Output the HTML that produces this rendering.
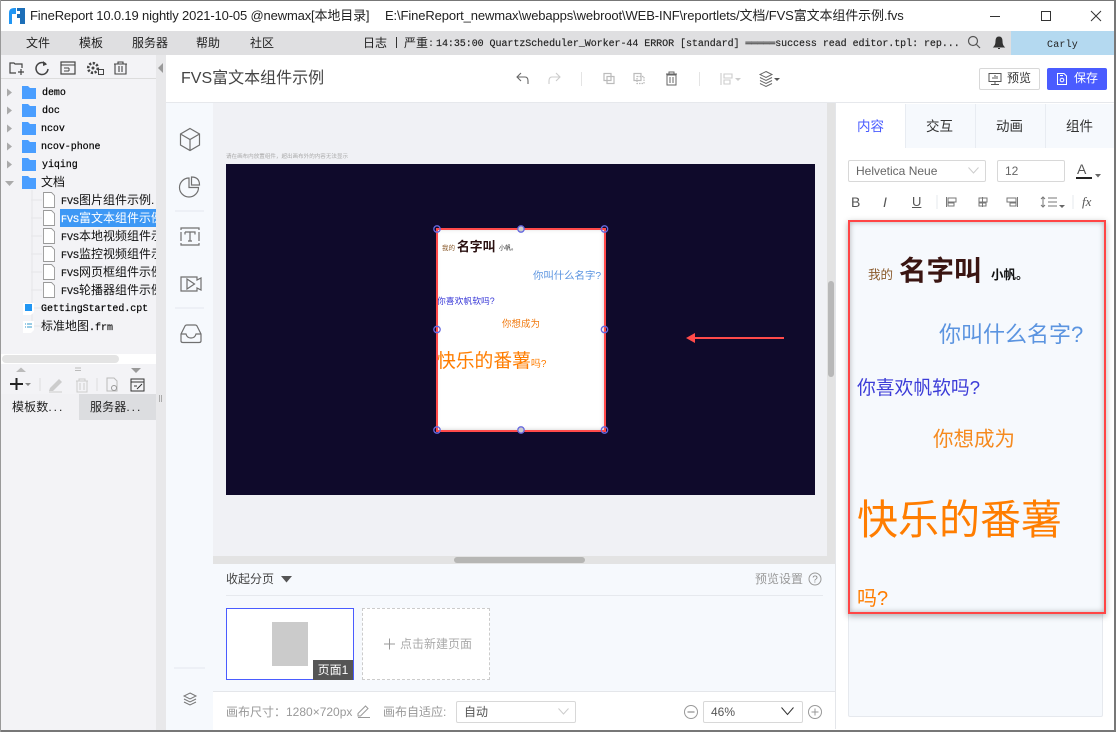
<!DOCTYPE html>
<html><head><meta charset="utf-8">
<style>
html,body{margin:0;padding:0;width:1116px;height:732px;overflow:hidden;background:#fff}
body{position:relative;font-family:"Liberation Sans","Noto Sans CJK SC",sans-serif;color:#333}
.a{position:absolute;white-space:nowrap}
.t{position:absolute;white-space:nowrap;font-family:"Liberation Mono","Noto Sans CJK SC",monospace;font-size:10px;color:#000;line-height:18px;height:18px;letter-spacing:-.05px;-webkit-text-stroke:.2px #000}
.f{font:10px "Liberation Mono",monospace;letter-spacing:-.02px;-webkit-text-stroke:.2px currentColor}
svg{position:absolute;overflow:visible}
.g{fill:none;stroke:#707070;stroke-width:1.2}
.l{fill:none;stroke:#555;stroke-width:1.2}
.d{fill:none;stroke:#bbb;stroke-width:1.2}
</style></head><body>
<!-- title -->
<svg style="left:9px;top:8px" width="16" height="16"><path d="M0 5 Q0 0 5 0H7V6H3V16H0Z" fill="#2196f3"/><path d="M8 0H16V16H11V10H8V6H11V3H8Z" fill="#1d6fb8"/></svg>
<div class="a" style="left:30px;top:7px;font-size:13px;line-height:18px;color:#222;letter-spacing:-.15px">FineReport 10.0.19 nightly 2021-10-05 @newmax[本地目录]</div>
<div class="a" style="left:385px;top:7px;font-size:13px;line-height:18px;color:#222;letter-spacing:-.12px">E:\FineReport_newmax\webapps\webroot\WEB-INF\reportlets/文档/FVS富文本组件示例.fvs</div>
<svg style="left:990px;top:10px" width="120" height="14"><path d="M0 6.500H10" stroke="#333" fill="none"/><rect x="51.500" y="1.500" width="9" height="9" stroke="#333" fill="none"/><path d="M101 1L111 11M111 1L101 11" stroke="#333" fill="none"/></svg>
<!-- menu -->
<div class="a" style="left:1px;top:31px;width:1115px;height:24px;background:#dfdfe1"></div>
<div class="a" style="left:1011px;top:31px;width:105px;height:24px;background:#b4d9f0"></div>
<div class="a" style="left:26px;top:34px;font-size:12px;line-height:18px;color:#222">文件</div>
<div class="a" style="left:79px;top:34px;font-size:12px;line-height:18px;color:#222">模板</div>
<div class="a" style="left:132px;top:34px;font-size:12px;line-height:18px;color:#222">服务器</div>
<div class="a" style="left:196px;top:34px;font-size:12px;line-height:18px;color:#222">帮助</div>
<div class="a" style="left:250px;top:34px;font-size:12px;line-height:18px;color:#222">社区</div>
<div class="a" style="left:363px;top:34px;font-size:12px;line-height:18px;color:#222">日志</div>
<div class="a" style="left:396px;top:37px;width:1px;height:11px;background:#333"></div>
<div class="a" style="left:404px;top:34px;font-size:12px;line-height:18px;color:#222">严重</div>
<div class="a" style="left:428px;top:37px;font:10px/16px 'Liberation Mono',monospace;color:#222">:</div>
<div class="a" style="left:436px;top:37px;font:10px/16px 'Liberation Mono',monospace;color:#222;letter-spacing:-.05px;-webkit-text-stroke:.15px #222">14:35:00 QuartzScheduler_Worker-44 ERROR [standard] ═════success read editor.tpl: rep...</div>
<svg style="left:967px;top:35px" width="40" height="16"><circle cx="6" cy="6" r="4.500" class="l"/><path d="M9.500 9.500L13 13" class="l"/><path d="M27 12Q29 10 29 6Q29 2 32 2Q35 2 35 6Q35 10 37 12Z M31 13.500H33" fill="#333" stroke="#333"/></svg>
<div class="a" style="left:1047px;top:38px;font:10px/16px 'Liberation Mono',monospace;letter-spacing:.2px;color:#222">Carly</div>

<!-- left panel -->
<div class="a" style="left:1px;top:55px;width:155px;height:677px;background:#f3f3f6"></div>
<div class="a" style="left:1px;top:78px;width:155px;height:1px;background:#dcdcdc"></div>
<div class="a" style="left:156px;top:55px;width:10px;height:677px;background:#e8e8ea"></div>
<svg style="left:158px;top:62px" width="6" height="12"><path d="M5 1V11L0 6Z" fill="#999"/></svg>
<svg style="left:9px;top:60px" width="125" height="16">
<path d="M7 13H1V3H5L6 4H13V8" fill="none" stroke="#444" stroke-width="1.200"/><path d="M12 9V15M9 12H15" stroke="#444" stroke-width="1.200"/>
<path d="M37 4A6 6 0 1 0 39 9" fill="none" stroke="#444" stroke-width="1.500"/><path d="M34 1L38 4.500L34 6Z" fill="#444"/>
<rect x="52" y="2" width="14" height="12" fill="none" stroke="#444" stroke-width="1.200"/><path d="M52 5H66M55 8H60M55 11H60M60 8V11" stroke="#444" fill="none"/>
<circle cx="84" cy="8" r="4.800" fill="none" stroke="#444" stroke-width="2.600" stroke-dasharray="2.200 1.500"/><circle cx="84" cy="8" r="1.500" fill="#444"/><rect x="89.500" y="9.500" width="5" height="5" fill="#f3f3f6" stroke="#444"/>
<path d="M105 4H118M109 4V2H114V4M106 4V14H117V4M110 6V12M113 6V12" fill="none" stroke="#444" stroke-width="1.100"/>
</svg>
<!-- tree arrows/folders -->
<svg style="left:0;top:84px" width="40" height="112">
<g fill="#aaa"><path d="M7 4.500L12 8.500L7 12.500Z"/><path d="M7 22.500L12 26.500L7 30.500Z"/><path d="M7 40.500L12 44.500L7 48.500Z"/><path d="M7 58.500L12 62.500L7 66.500Z"/><path d="M7 76.500L12 80.500L7 84.500Z"/><path d="M5 97L14 97L9.500 102Z"/></g>
<g fill="#4a9eff">
<path d="M22 2H28L30 4H36V15H22Z"/><path d="M22 20H28L30 22H36V33H22Z"/><path d="M22 38H28L30 40H36V51H22Z"/><path d="M22 56H28L30 58H36V69H22Z"/><path d="M22 74H28L30 76H36V87H22Z"/><path d="M22 92H28L30 94H36V105H22Z"/></g>
</svg>
<div class="t" style="left:42px;top:85px">demo</div>
<div class="t" style="left:42px;top:103px">doc</div>
<div class="t" style="left:41px;top:121px">ncov</div>
<div class="t" style="left:41px;top:139px">ncov-phone</div>
<div class="t" style="left:42px;top:157px">yiqing</div>
<div class="a" style="left:41px;top:173px;font-size:12px;line-height:18px;color:#111">文档</div>
<!-- file icons -->
<svg style="left:28px;top:190px" width="30" height="130"><path d="M3 10H14M3 28H14M3 46H14M3 64H14M3 82H14M3 100H14M3 118H20M3 136H20M4 0V136" stroke="#e6e6e8" fill="none"/>
<g fill="#fff" stroke="#999" stroke-width=".9"><path d="M15.500 2.500H23.500L26.500 5.500V17.500H15.500Z"/><path d="M15.500 20.500H23.500L26.500 23.500V35.500H15.500Z"/><path d="M15.500 38.500H23.500L26.500 41.500V53.500H15.500Z"/><path d="M15.500 56.500H23.500L26.500 59.500V71.500H15.500Z"/><path d="M15.500 74.500H23.500L26.500 77.500V89.500H15.500Z"/><path d="M15.500 92.500H23.500L26.500 95.500V107.500H15.500Z"/></g></svg>
<div class="a" style="left:60px;top:209px;width:96px;height:18px;background:#3d98f5"></div>
<div style="position:absolute;left:61px;top:191px;width:95px;height:126px;overflow:hidden;font-size:12px;line-height:18px;color:#111;white-space:nowrap">
<div><span class="f">FVS</span>图片组件示例.</div>
<div style="color:#fff"><span class="f">FVS</span>富文本组件示例</div>
<div><span class="f">FVS</span>本地视频组件示</div>
<div><span class="f">FVS</span>监控视频组件示</div>
<div><span class="f">FVS</span>网页框组件示例</div>
<div><span class="f">FVS</span>轮播器组件示例</div>
</div>
<svg style="left:22px;top:302px" width="14" height="32"><path d="M1 1H12V10L9 13H1Z" fill="#fff"/><rect x="3" y="2" width="7" height="7" fill="#2196f3"/><path d="M1 19H12V28L9 31H1Z" fill="#fff"/><path d="M3 22H4M5 22H10M3 25H4M5 25H10" stroke="#39c"/></svg>
<div class="t" style="left:41px;top:301px">GettingStarted.cpt</div>
<div class="a" style="left:41px;top:317px;font-size:12px;line-height:18px;color:#111">标准地图<span class="f">.frm</span></div>
<!-- tree scrollbar -->
<div class="a" style="left:1px;top:354px;width:155px;height:10px;background:#fff"></div>
<div class="a" style="left:2px;top:355px;width:117px;height:8px;background:#e4e4e4;border-radius:4px"></div>
<svg style="left:0;top:364px" width="156" height="10"><path d="M16 8L21 3.500L26 8Z" fill="#bbb"/><path d="M75 4H81M75 6.500H81" stroke="#bbb"/><path d="M131 4H141L136 9Z" fill="#999"/></svg>
<svg style="left:8px;top:375px" width="148" height="20">
<path d="M2 9H15M8.500 3V15" stroke="#222" stroke-width="2"/><path d="M17 8H23L20 11Z" fill="#888"/>
<path d="M32 3V16" stroke="#ddd"/>
<path d="M42 13L51 4L54 7L45 16H41Z" fill="#ccc"/><path d="M41 17H54" stroke="#ccc"/>
<path d="M68 6H80M71 6V4H77V6M69 6V17H79V6M72 8V15M76 8V15" fill="none" stroke="#ccc" stroke-width="1"/>
<path d="M89 3V16" stroke="#ddd"/>
<path d="M99 3H106L109 6V16H99Z" fill="none" stroke="#bbb"/><circle cx="106" cy="13" r="2.500" fill="none" stroke="#999"/>
<rect x="123" y="4" width="13" height="12" fill="none" stroke="#333"/><path d="M123 7H136" stroke="#333"/><path d="M126 11H129M129 14L134 9" stroke="#333" fill="none"/>
</svg>
<div class="a" style="left:1px;top:394px;width:78px;height:26px;background:#f1f1f4"></div>
<div class="a" style="left:79px;top:394px;width:77px;height:26px;background:#dcdde0"></div>
<div class="a" style="left:12px;top:398px;font-size:12px;line-height:18px;color:#222;letter-spacing:.1px">模板数<span style="letter-spacing:2px">...</span></div>
<div class="a" style="left:90px;top:398px;font-size:12px;line-height:18px;color:#222;letter-spacing:.1px">服务器<span style="letter-spacing:2px">...</span></div>
<div class="a" style="left:159px;top:395px;width:1px;height:7px;background:#aaa;box-shadow:2px 0 #aaa"></div>

<!-- header -->
<div class="a" style="left:166px;top:55px;width:950px;height:47px;background:#fff"></div>
<div class="a" style="left:166px;top:102px;width:950px;height:1px;background:#e6e8ec"></div>
<div class="a" style="left:181px;top:69px;font-size:16px;line-height:20px;color:#444">FVS富文本组件示例</div>
<svg style="left:510px;top:70px" width="280" height="18">
<path d="M11 3L7 7L11 11M7 7H15Q18 7 18 11V14" fill="none" stroke="#666" stroke-width="1.100"/>
<path d="M46 3L50 7L46 11M50 7H42Q39 7 39 11V14" fill="none" stroke="#ccc" stroke-width="1.100"/>
<path d="M71.500 2V16" stroke="#e4e4e4"/>
<rect x="94" y="3.500" width="7" height="7" class="d"/><rect x="97" y="6.500" width="7" height="7" class="d"/>
<rect x="124" y="3.500" width="7" height="7" class="d"/><rect x="127" y="6.500" width="7" height="7" class="d" stroke-dasharray="1.500 1"/>
<path d="M156 4H167M159 4V2H164V4M157 5H166V15H157ZM160 7V13M163 7V13" fill="#fff" stroke="#666" stroke-width="1"/>
<path d="M189.500 2V16" stroke="#e4e4e4"/>
<path d="M211 3V15M214 4H222V8H214ZM214 10H220V14H214Z" fill="none" stroke="#ccc" stroke-width="1.100"/><path d="M225 8H231L228 11Z" fill="#ccc"/>
<path d="M256 1.500L262 4.500L256 7.500L250 4.500Z M250 7.500L256 10.500L262 7.500M250 10.500L256 13.500L262 10.500M250 13.500L256 16.500L262 13.500" fill="none" stroke="#666"/><path d="M264 8H270L267 11Z" fill="#555"/>
</svg>
<div class="a" style="left:979px;top:68px;width:59px;height:20px;border:1px solid #d8d8d8;border-radius:2px"></div>
<svg style="left:988px;top:72px" width="16" height="14"><rect x="1" y="1.500" width="12" height="8" fill="none" stroke="#555"/><path d="M7 9V12M3 12.500H11M5 7V5M7 7V3M9 7V4" stroke="#555"/></svg>
<div class="a" style="left:1007px;top:70px;font-size:12px;line-height:17px;color:#333">预览</div>
<div class="a" style="left:1047px;top:68px;width:60px;height:22px;background:#4a5cff;border-radius:2px"></div>
<svg style="left:1055px;top:72px" width="14" height="14"><path d="M2.500 1.500H9L11.500 4V12.500H2.500Z" fill="none" stroke="#fff"/><circle cx="7" cy="8" r="1.800" fill="none" stroke="#fff"/><path d="M5 3.500H8" stroke="#fff"/></svg>
<div class="a" style="left:1074px;top:70px;font-size:12px;line-height:17px;color:#fff">保存</div>

<!-- left rail -->
<div class="a" style="left:166px;top:103px;width:47px;height:629px;background:#f6f9fd"></div>
<svg style="left:166px;top:103px" width="47" height="610">
<path d="M24 25.500L33.500 31V42L24 47.500L14.500 42V31Z M14.500 31L24 36.500L33.500 31M24 36.500V47.500" class="g"/>
<path d="M23 75A9.500 9.500 0 1 0 32.500 84.500H23Z M25.500 74V82H33.500Q33.500 74 25.500 74Z" class="g"/>
<path d="M9 108H38M9 205H38" stroke="#e4e8ee"/>
<path d="M15 127V125H33V127M15 140V142H33V140M15 129V138M33 129V138" class="g"/><path d="M19 129H29V131.500M19 131.500V129M24 129V138M22 138H26" class="g"/>
<path d="M15 174V188H31V185L35 187V175L31 177V174Z" class="g"/><path d="M21 176V186L28.500 181Z" class="g"/>
<path d="M15 231V238Q15 239.500 17 239.500H33Q35 239.500 35 238V231L31 223Q30.500 222 29 222H21Q19.500 222 19 223Z M15 231H20Q21 235 25 235Q29 235 30 231H35" class="g"/>
<path d="M8 565H39" stroke="#e4e8ee"/>
<path d="M24 590L30 593L24 596L18 593Z M18 596L24 599L30 596M18 599L24 602L30 599" fill="none" stroke="#777" stroke-width="1"/>
</svg>

<!-- canvas -->
<div class="a" style="left:213px;top:103px;width:614px;height:453px;background:#f0f1f5"></div>
<div class="a" style="left:827px;top:103px;width:9px;height:453px;background:#e3e3e3"></div>
<div class="a" style="left:828px;top:281px;width:6px;height:96px;background:#b8b8b8;border-radius:3px"></div>
<div class="a" style="left:213px;top:556px;width:623px;height:8px;background:#e3e3e3"></div>
<div class="a" style="left:454px;top:557px;width:131px;height:6px;background:#b6b6b4;border-radius:3px"></div>
<div class="a" style="left:226px;top:153px;font-size:5.550px;line-height:9px;color:#aaa">请在画布内放置组件，超出画布外的内容无法显示</div>
<div class="a" style="left:226px;top:164px;width:589px;height:331px;background:#0f0a2b"></div>
<div class="a" style="left:436px;top:229px;width:168px;height:201px;background:#fff;box-shadow:inset 0 0 4px #ccc"></div>
<div class="a" style="left:436px;top:229px;width:168px;height:201px;overflow:hidden">
 <div class="a" style="left:6px;top:15px;font-size:6.500px;line-height:10px;color:#8a5a2b">我的</div>
 <div class="a" style="left:21px;top:9px;font-size:12.800px;font-weight:bold;line-height:17px;color:#2a1010">名字叫</div>
 <div class="a" style="left:63px;top:15px;font-size:6px;line-height:10px;color:#222">小帆。</div>
 <div class="a" style="left:97px;top:40px;font-size:10.400px;line-height:15px;color:#5b94e0">你叫什么名字?</div>
 <div class="a" style="left:1px;top:65px;font-size:8.800px;line-height:14px;color:#3a3ad8">你喜欢帆软吗?</div>
 <div class="a" style="left:66px;top:89px;font-size:9.500px;line-height:14px;color:#f07a10">你想成为</div>
 <div class="a" style="left:1px;top:119px;font-size:18.800px;line-height:26px;color:#ff7d00">快乐的番薯<span style="font-size:10px">吗?</span></div>
</div>
<div class="a" style="left:436px;top:228px;width:166px;height:200px;border:2px solid #ff4a4a"></div>
<svg style="left:430px;top:222px" width="180" height="214" fill="none" stroke="#6668e0" stroke-width="1.300">
<circle cx="7" cy="7" r="3.200"/><circle cx="91" cy="7" r="3.200" fill="#ccc"/><circle cx="174.500" cy="7" r="3.200"/>
<circle cx="7" cy="107.500" r="3.200"/><circle cx="174.500" cy="107.500" r="3.200"/>
<circle cx="7" cy="208" r="3.200"/><circle cx="91" cy="208" r="3.200" fill="#ccc"/><circle cx="174.500" cy="208" r="3.200"/>
</svg>
<svg style="left:686px;top:332px" width="100" height="12"><path d="M7 6H98" stroke="#ff4a4a" stroke-width="2"/><path d="M0 6L9 1V11Z" fill="#ff4a4a"/></svg>

<!-- page panel -->
<div class="a" style="left:213px;top:564px;width:623px;height:127px;background:#f6f9fd"></div>
<div class="a" style="left:226px;top:570px;font-size:12px;line-height:18px;color:#444">收起分页</div>
<svg style="left:281px;top:576px" width="12" height="8"><path d="M0 0H11L5.500 6.500Z" fill="#555"/></svg>
<div class="a" style="left:755px;top:570px;font-size:12px;line-height:18px;color:#999">预览设置</div>
<svg style="left:808px;top:572px" width="14" height="14"><circle cx="7" cy="7" r="6" fill="none" stroke="#999"/><text x="7" y="10.500" font-size="10" text-anchor="middle" fill="#888" font-family="Liberation Sans">?</text></svg>
<div class="a" style="left:226px;top:595px;width:597px;height:1px;background:#e6e9ee"></div>
<div class="a" style="left:226px;top:608px;width:126px;height:70px;border:1px solid #4a5cff;background:#fff"></div>
<div class="a" style="left:272px;top:622px;width:36px;height:44px;background:#cbcbcb"></div>
<div class="a" style="left:313px;top:660px;width:40px;height:20px;background:#555;color:#fff;font-size:12px;line-height:20px;text-align:center">页面1</div>
<div class="a" style="left:362px;top:608px;width:126px;height:70px;border:1px dashed #ccc;background:#fff"></div>
<svg style="left:384px;top:638px" width="12" height="12"><path d="M0 6H11M5.500 0.500V11.500" stroke="#999"/></svg>
<div class="a" style="left:400px;top:635px;font-size:12px;line-height:18px;color:#aaa">点击新建页面</div>

<!-- bottom bar -->
<div class="a" style="left:213px;top:691px;width:623px;height:38px;background:#fff;border-top:1px solid #e4e6ea"></div>
<div class="a" style="left:226px;top:704px;font-size:12px;line-height:17px;color:#999">画布尺寸：1280×720px</div>
<svg style="left:357px;top:704px" width="14" height="14"><path d="M1 9.500L8.500 2L11 4.500L3.500 12H1ZM1 13.500H13" fill="none" stroke="#999"/></svg>
<div class="a" style="left:383px;top:704px;font-size:12px;line-height:17px;color:#999">画布自适应:</div>
<div class="a" style="left:456px;top:701px;width:118px;height:20px;border:1px solid #d8d8d8;border-radius:2px;background:#fff"></div>
<div class="a" style="left:464px;top:704px;font-size:12px;line-height:17px;color:#555">自动</div>
<svg style="left:558px;top:708px" width="12" height="8"><path d="M0.500 0.500L5.500 6L10.500 0.500" fill="none" stroke="#ccc"/></svg>
<svg style="left:684px;top:705px" width="14" height="14"><circle cx="7" cy="7" r="6.500" fill="none" stroke="#999"/><path d="M3.500 7H10.500" stroke="#777"/></svg>
<div class="a" style="left:703px;top:701px;width:98px;height:20px;border:1px solid #d8d8d8;border-radius:2px;background:#fff"></div>
<div class="a" style="left:711px;top:704px;font-size:12px;line-height:17px;color:#555">46%</div>
<svg style="left:781px;top:707px" width="14" height="9"><path d="M0.500 0.500L6.500 7.500L12.500 0.500" fill="none" stroke="#333"/></svg>
<svg style="left:808px;top:705px" width="14" height="14"><circle cx="7" cy="7" r="6.500" fill="none" stroke="#999"/><path d="M3.500 7H10.500M7 3.500V10.500" stroke="#999"/></svg>

<!-- right panel -->
<div class="a" style="left:835px;top:103px;width:1px;height:626px;background:#e4e6ea"></div>
<div class="a" style="left:906px;top:104px;width:210px;height:44px;background:#f6f9fd"></div>
<div class="a" style="left:905px;top:104px;width:1px;height:44px;background:#e8ecf2"></div>
<div class="a" style="left:975px;top:104px;width:1px;height:44px;background:#e8ecf2"></div>
<div class="a" style="left:1045px;top:104px;width:1px;height:44px;background:#e8ecf2"></div>
<div class="a" style="left:857px;top:118px;font-size:13.500px;line-height:18px;color:#4a5cff">内容</div>
<div class="a" style="left:926px;top:118px;font-size:13.500px;line-height:18px;color:#333">交互</div>
<div class="a" style="left:996px;top:118px;font-size:13.500px;line-height:18px;color:#333">动画</div>
<div class="a" style="left:1066px;top:118px;font-size:13.500px;line-height:18px;color:#333">组件</div>
<div class="a" style="left:848px;top:160px;width:136px;height:20px;border:1px solid #d8d8d8;border-radius:2px"></div>
<div class="a" style="left:856px;top:164px;font-size:12px;line-height:15px;color:#666">Helvetica Neue</div>
<svg style="left:968px;top:167px" width="11" height="7"><path d="M.5 .5L5.500 6L10.500 .5" fill="none" stroke="#ccc"/></svg>
<div class="a" style="left:997px;top:160px;width:66px;height:20px;border:1px solid #d8d8d8;border-radius:2px"></div>
<div class="a" style="left:1005px;top:164px;font-size:12px;line-height:15px;color:#666">12</div>
<div class="a" style="left:1077px;top:162px;font-size:14px;line-height:15px;color:#555">A</div>
<div class="a" style="left:1076px;top:177px;width:16px;height:1.500px;background:#222"></div>
<svg style="left:1095px;top:174px" width="6" height="4"><path d="M0 0H6L3 3.500Z" fill="#666"/></svg>
<div class="a" style="left:851px;top:194px;font-size:14px;line-height:16px;color:#555">B</div>
<div class="a" style="left:883px;top:194px;font-size:14px;line-height:16px;color:#555;font-style:italic">I</div>
<div class="a" style="left:912px;top:194px;font-size:13px;line-height:16px;color:#555;text-decoration:underline">U</div>
<svg style="left:936px;top:194px" width="165" height="16">
<path d="M1 1V15M137 1V15" stroke="#e4e8ee"/>
<path d="M10.500 3V13M12 4H20V8H12ZM12 9H18V12H12Z" fill="none" stroke="#777"/>
<path d="M46.500 3V13M43 4H51V8H43ZM43 9H50V12H43Z" fill="none" stroke="#777"/>
<path d="M81.500 3V13M71 4H80V8H71ZM74 9H80V12H74Z" fill="none" stroke="#777"/>
<path d="M107 3V13M105 5L107 3L109 5M105 11L107 13L109 11M112 4H121M112 8H121M112 12H121" fill="none" stroke="#777"/><path d="M123 11H129L126 14Z" fill="#666"/>
</svg>
<div class="a" style="left:1082px;top:194px;font:italic 13px/16px 'Liberation Serif',serif;color:#555">fx</div>

<div class="a" style="left:848px;top:222px;width:253px;height:493px;background:#f6f9fd;border:1px solid #e6e9ee;border-radius:2px"></div>
<div class="a" style="left:848px;top:220px;width:254px;height:390px;border:2px solid #ff4545;box-shadow:0 2px 6px rgba(0,0,0,.3),inset 0 0 6px rgba(0,0,0,.28);background:#f6f9fd"></div>
<div class="a" style="left:868px;top:267px;font-size:12.500px;line-height:17px;color:#8a5a2b">我的</div>
<div class="a" style="left:899px;top:253px;font-size:27.500px;font-weight:bold;line-height:36px;color:#3a1512">名字叫</div>
<div class="a" style="left:991px;top:267px;font-size:12.500px;font-weight:bold;line-height:17px;color:#111">小帆。</div>
<div class="a" style="left:939px;top:320px;font-size:22px;line-height:30px;color:#5b94e0">你叫什么名字?</div>
<div class="a" style="left:857px;top:375px;font-size:18.800px;line-height:26px;color:#3c3cd8">你喜欢帆软吗?</div>
<div class="a" style="left:933px;top:427px;font-size:20.500px;line-height:26px;color:#f58a1f">你想成为</div>
<div class="a" style="left:857px;top:492px;font-size:41px;line-height:56px;color:#ff7d00">快乐的番薯</div>
<div class="a" style="left:857px;top:586px;font-size:20px;line-height:26px;color:#ff7d00">吗?</div>

<!-- window frame -->
<div class="a" style="left:0;top:0;width:1116px;height:1px;background:#777"></div>
<div class="a" style="left:0;top:730px;width:1116px;height:2px;background:#777"></div>
<div class="a" style="left:0;top:0;width:1px;height:732px;background:#999"></div>
<div class="a" style="left:1114px;top:0;width:2px;height:732px;background:#777"></div>
</body></html>
